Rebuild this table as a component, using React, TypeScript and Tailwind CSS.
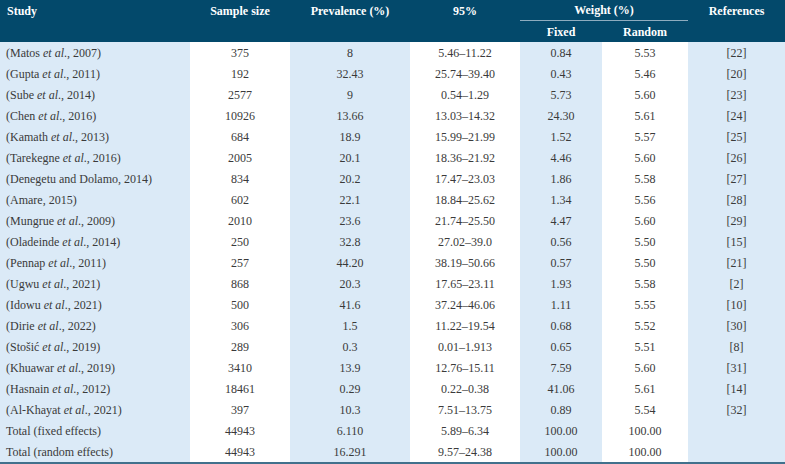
import type { ReactNode } from "react";

type Row = {
  study: ReactNode;
  n: string;
  prev: string;
  ci: string;
  fixed: string;
  random: string;
  ref: string;
};

const etal = (name: string, year: string) => (
  <>
    ({name} <i>et al</i>., {year})
  </>
);

const rows: Row[] = [
  { study: etal("Matos", "2007"), n: "375", prev: "8", ci: "5.46–11.22", fixed: "0.84", random: "5.53", ref: "[22]" },
  { study: etal("Gupta", "2011"), n: "192", prev: "32.43", ci: "25.74–39.40", fixed: "0.43", random: "5.46", ref: "[20]" },
  { study: etal("Sube", "2014"), n: "2577", prev: "9", ci: "0.54–1.29", fixed: "5.73", random: "5.60", ref: "[23]" },
  { study: etal("Chen", "2016"), n: "10926", prev: "13.66", ci: "13.03–14.32", fixed: "24.30", random: "5.61", ref: "[24]" },
  { study: etal("Kamath", "2013"), n: "684", prev: "18.9", ci: "15.99–21.99", fixed: "1.52", random: "5.57", ref: "[25]" },
  { study: etal("Tarekegne", "2016"), n: "2005", prev: "20.1", ci: "18.36–21.92", fixed: "4.46", random: "5.60", ref: "[26]" },
  { study: "(Denegetu and Dolamo, 2014)", n: "834", prev: "20.2", ci: "17.47–23.03", fixed: "1.86", random: "5.58", ref: "[27]" },
  { study: "(Amare, 2015)", n: "602", prev: "22.1", ci: "18.84–25.62", fixed: "1.34", random: "5.56", ref: "[28]" },
  { study: etal("Mungrue", "2009"), n: "2010", prev: "23.6", ci: "21.74–25.50", fixed: "4.47", random: "5.60", ref: "[29]" },
  { study: etal("Oladeinde", "2014"), n: "250", prev: "32.8", ci: "27.02–39.0", fixed: "0.56", random: "5.50", ref: "[15]" },
  { study: etal("Pennap", "2011"), n: "257", prev: "44.20", ci: "38.19–50.66", fixed: "0.57", random: "5.50", ref: "[21]" },
  { study: etal("Ugwu", "2021"), n: "868", prev: "20.3", ci: "17.65–23.11", fixed: "1.93", random: "5.58", ref: "[2]" },
  { study: etal("Idowu", "2021"), n: "500", prev: "41.6", ci: "37.24–46.06", fixed: "1.11", random: "5.55", ref: "[10]" },
  { study: etal("Dirie", "2022"), n: "306", prev: "1.5", ci: "11.22–19.54", fixed: "0.68", random: "5.52", ref: "[30]" },
  { study: etal("Stošić", "2019"), n: "289", prev: "0.3", ci: "0.01–1.913", fixed: "0.65", random: "5.51", ref: "[8]" },
  { study: etal("Khuawar", "2019"), n: "3410", prev: "13.9", ci: "12.76–15.11", fixed: "7.59", random: "5.60", ref: "[31]" },
  { study: etal("Hasnain", "2012"), n: "18461", prev: "0.29", ci: "0.22–0.38", fixed: "41.06", random: "5.61", ref: "[14]" },
  { study: etal("Al-Khayat", "2021"), n: "397", prev: "10.3", ci: "7.51–13.75", fixed: "0.89", random: "5.54", ref: "[32]" },
  { study: "Total (fixed effects)", n: "44943", prev: "6.110", ci: "5.89–6.34", fixed: "100.00", random: "100.00", ref: "" },
  { study: "Total (random effects)", n: "44943", prev: "16.291", ci: "9.57–24.38", fixed: "100.00", random: "100.00", ref: "" },
];

const blue = "bg-[#dbeaf7]";

export default function App() {
  return (
    <div className="w-[785px] h-[464px] overflow-hidden bg-white font-['Liberation_Serif',serif] text-[12px] text-[#3a3a3a]">
      <table className="w-[785px] table-fixed border-collapse">
        <colgroup>
          <col className="w-[190px]" />
          <col className="w-[100px]" />
          <col className="w-[120px]" />
          <col className="w-[110px]" />
          <col className="w-[82px]" />
          <col className="w-[86px]" />
          <col className="w-[97px]" />
        </colgroup>
        <thead className="bg-[#03496b] font-bold text-white">
          <tr className="h-[21px]">
            <th rowSpan={2} className="pl-[7px] pt-[2px] text-left align-top leading-[19px]">
              Study
            </th>
            <th rowSpan={2} className="pt-[2px] text-center align-top leading-[19px]">
              Sample size
            </th>
            <th rowSpan={2} className="pt-[2px] text-center align-top leading-[19px]">
              Prevalence (%)
            </th>
            <th rowSpan={2} className="pt-[2px] text-center align-top leading-[19px]">
              95%
            </th>
            <th colSpan={2} className="p-0 pt-[1px] text-center align-top leading-[19px]">
              <div className="border-b border-[#8eacbf]">Weight (%)</div>
            </th>
            <th rowSpan={2} className="pt-[2px] text-center align-top leading-[19px]">
              References
            </th>
          </tr>
          <tr className="h-[21px]">
            <th className="p-0 pt-[1px] text-center leading-[20px]">Fixed</th>
            <th className="p-0 pt-[1px] text-center leading-[20px]">Random</th>
          </tr>
        </thead>
        <tbody className="border-b-2 border-[#41708c]">
          {rows.map((r, i) => (
            <tr key={i} className="h-[21px] leading-[19px]">
              <td className={`${blue} truncate pl-[6px] pt-[2px]`}>{r.study}</td>
              <td className="pt-[2px] text-center">{r.n}</td>
              <td className={`${blue} pt-[2px] text-center`}>{r.prev}</td>
              <td className="pt-[2px] text-center">{r.ci}</td>
              <td className={`${blue} pt-[2px] text-center`}>{r.fixed}</td>
              <td className="pt-[2px] text-center">{r.random}</td>
              <td className={`${blue} pt-[2px] text-center`}>{r.ref}</td>
            </tr>
          ))}
        </tbody>
      </table>
    </div>
  );
}
